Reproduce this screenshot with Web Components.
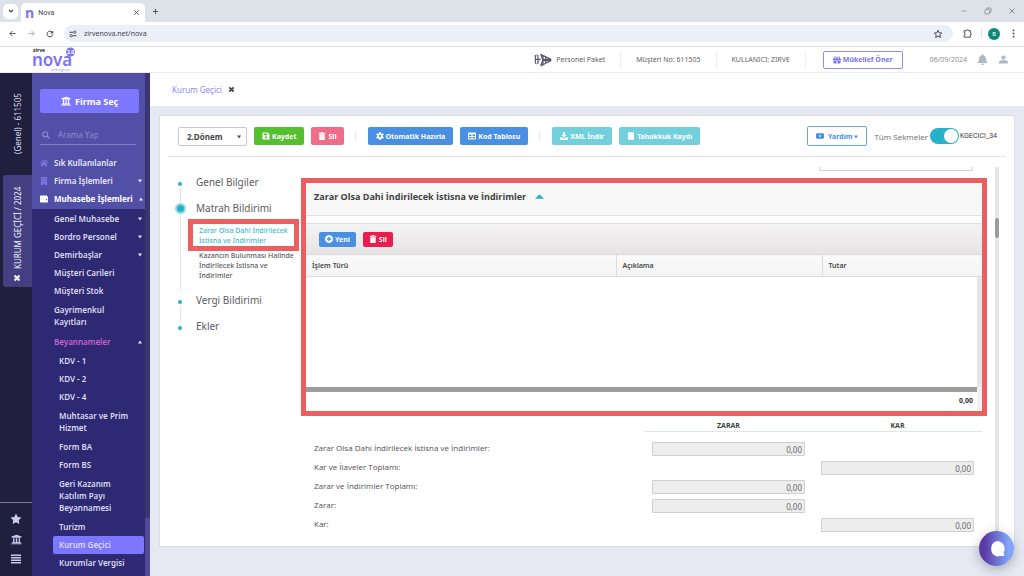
<!DOCTYPE html>
<html lang="tr">
<head>
<meta charset="utf-8">
<title>Nova</title>
<style>
  html, body { margin: 0; height: 100%; }
  body { font-family: "Open Sans", "Noto Sans", sans-serif; font-size: 8px; color: #4a4a4a; background: #e6e9f2; }
</style>
</head>
<body>
<nova-window></nova-window>
<script>
const RESET = `
  *, *::before, *::after { box-sizing: border-box; }
  :host { box-sizing: border-box; display: block; }
  button, input, select { font: inherit; color: inherit; margin: 0; padding: 0; border: 0; background: none; }
  ul, ol { list-style: none; margin: 0; padding: 0; }
  a { color: inherit; text-decoration: none; }
`;
class Base extends HTMLElement {
  connectedCallback() {
    if (this.shadowRoot) return;
    this.attachShadow({ mode: 'open' }).innerHTML = `<style>${RESET}${this.css()}</style>${this.html()}`;
  }
  css() { return ''; }
  html() { return '<slot></slot>'; }
}
const define = (name, css, html) => customElements.define(name, class extends Base {
  css() { return css; }
  html() { return typeof html === 'function' ? html(this) : html; }
});

/* Icons: [viewBox, markup] */
const ICONS = {
  chevron: ['0 0 16 16', '<path d="M4 6l4 4 4-4" fill="none" stroke="currentColor" stroke-width="2.4"/>'],
  close: ['0 0 16 16', '<path d="M3 3l10 10M13 3L3 13" fill="none" stroke="currentColor" stroke-width="2"/>'],
  closeBold: ['0 0 16 16', '<path d="M3 3l10 10M13 3L3 13" fill="none" stroke="currentColor" stroke-width="4.4"/>'],
  plus: ['0 0 16 16', '<path d="M8 2v12M2 8h12" fill="none" stroke="currentColor" stroke-width="2"/>'],
  back: ['0 0 16 16', '<path d="M15 8H2M8 2L2 8l6 6" fill="none" stroke="currentColor" stroke-width="2"/>'],
  forward: ['0 0 16 16', '<path d="M1 8h13M8 2l6 6-6 6" fill="none" stroke="currentColor" stroke-width="2"/>'],
  reload: ['0 0 16 16', '<path d="M13.5 9A5.7 5.7 0 1 1 12 4" fill="none" stroke="currentColor" stroke-width="2"/><path d="M14.5 1v6h-6z" fill="currentColor"/>'],
  tune: ['0 0 16 16', '<path d="M1 4.5h7M8 11.5h7" stroke="currentColor" stroke-width="2"/><circle cx="11.5" cy="4.5" r="2.4" fill="none" stroke="currentColor" stroke-width="1.8"/><circle cx="4.5" cy="11.5" r="2.4" fill="none" stroke="currentColor" stroke-width="1.8"/>'],
  starLine: ['0 0 24 24', '<path d="M12 3l2.7 6 6.3.6-4.800 4.300 1.400 6.600L12 17l-5.600 3.500 1.400-6.600L3 9.600 9.300 9z" fill="none" stroke="currentColor" stroke-width="2.300"/>'],
  puzzle: ['0 0 16 16', '<path d="M2 3h4.200a1.800 1.800 0 0 1 3.600 0H13v4a1.800 1.800 0 0 1 0 3.600V14.500H2v-3.500a2 2 0 0 0 0-4z" fill="none" stroke="currentColor" stroke-width="1.700"/>'],
  dots: ['0 0 16 16', '<circle cx="8" cy="2.500" r="1.700" fill="currentColor"/><circle cx="8" cy="8" r="1.700" fill="currentColor"/><circle cx="8" cy="13.500" r="1.700" fill="currentColor"/>'],
  minimize: ['0 0 16 16', '<path d="M1 8h14" stroke="currentColor" stroke-width="2"/>'],
  restore: ['0 0 16 16', '<rect x="2" y="5" width="9" height="9" rx="2" fill="none" stroke="currentColor" stroke-width="1.800"/><path d="M5 3.500Q5 2 7 2h5q2 0 2 2v5q0 2-1.500 2" fill="none" stroke="currentColor" stroke-width="1.800"/>'],
  gift: ['0 0 512 512', '<path fill="currentColor" d="M32 448c0 17.700 14.300 32 32 32h160V320H32zm256 32h160c17.700 0 32-14.300 32-32V320H288zM480 160h-42c6-12 10-25 10-40 0-48-39-88-88-88-41 0-68 21-104 69-35-48-62-69-103-69-49 0-88 40-88 88 0 15 3 28 10 40H32c-18 0-32 14-32 32v80c0 9 7 16 16 16h480c9 0 16-7 16-16v-80c0-18-14-32-32-32zm-327 0a40 40 0 0 1 0-80c21 0 31 4 85 80zm206 0h-85c54-76 64-80 85-80a40 40 0 0 1 0 80z"/>'],
  bell: ['0 0 448 512', '<path fill="currentColor" d="M224 512c35 0 64-29 64-64H160c0 35 29 64 64 64zm215-150c-19-21-55-52-55-154 0-78-54-140-128-155V32a32 32 0 0 0-64 0v21C118 68 64 130 64 208c0 102-36 133-55 154-6 6-9 14-9 22 0 16 13 32 32 32h384c19 0 32-16 32-32 0-8-3-16-9-22z"/>'],
  user: ['0 0 16 16', '<circle cx="8" cy="4.500" r="3.800" fill="currentColor"/><path d="M0 15v-2.500c0-2 4-3.500 8-3.500s8 1.500 8 3.500V15z" fill="currentColor"/>'],
  bank: ['0 0 512 512', '<path fill="currentColor" d="M496 128v16a8 8 0 0 1-8 8h-24v12c0 7-5 12-12 12H60c-7 0-12-5-12-12v-12H24a8 8 0 0 1-8-8v-16a8 8 0 0 1 5-7l232-88a8 8 0 0 1 6 0l232 88a8 8 0 0 1 5 7zm-24 304H40c-13 0-24 11-24 24v16a8 8 0 0 0 8 8h464a8 8 0 0 0 8-8v-16c0-13-11-24-24-24zM96 192v192H60c-7 0-12 5-12 12v20h416v-20c0-7-5-12-12-12h-36V192h-64v192h-64V192h-64v192h-64V192z"/>'],
  search: ['0 0 16 16', '<circle cx="6.500" cy="6.500" r="5" fill="none" stroke="currentColor" stroke-width="2.400"/><path d="M10 10l5 5" stroke="currentColor" stroke-width="3"/>'],
  home: ['0 0 16 16', '<path fill="currentColor" d="M8 1L0 8l1 1.200L8 3.200l7 6L16 8l-2.500-2.200V2h-2v2zM2.500 9.500L8 4.800l5.500 4.700V15H9.700v-4H6.300v4H2.500z"/>'],
  building: ['0 0 16 16', '<path fill="currentColor" fill-rule="evenodd" d="M2 0h12v16H9.500v-3h-3v3H2zM4.500 2v2h2V2zm5 0v2h2V2zm-5 3.500v2h2v-2zm5 0v2h2v-2zM4.500 9v2h2V9zm5 0v2h2V9z"/>'],
  wallet: ['0 0 16 16', '<path fill="currentColor" fill-rule="evenodd" d="M1.500 1H13q1.500 0 1.500 2H16v10.500Q16 15 14.500 15h-13Q0 15 0 13.500v-11Q0 1 1.500 1zM13 8.200a1.200 1.200 0 1 0 .1 0z"/>'],
  star: ['0 0 24 24', '<path fill="currentColor" d="M12 1l3.400 7 7.600 1-5.500 5.300 1.300 7.700L12 18.400 5.200 22l1.300-7.700L1 9l7.600-1z"/>'],
  bars: ['0 0 16 16', '<path d="M0 2h16M0 6h16M0 10h16M0 14h16" stroke="currentColor" stroke-width="2.2"/>'],
  save: ['0 0 16 16', '<path fill="currentColor" fill-rule="evenodd" d="M2 1h9.500L15 4.500V14q0 1-1 1H2q-1 0-1-1V2q0-1 1-1zM3.500 3v3.500h7V3zM8 8.600a2.200 2.200 0 1 0 .1 0z"/>'],
  trash: ['0 0 16 16', '<path fill="currentColor" d="M1.500 1.500H5.500L6.500 0h3l1 1.500h4v2h-13zM2.500 4.500h11V15q0 1-1 1h-9q-1 0-1-1z"/><path d="M5.500 6.500v7M8 6.500v7M10.500 6.500v7" stroke="#e88" stroke-opacity=".4" stroke-width=".8"/>'],
  gear: ['0 0 16 16', '<circle cx="8" cy="8" r="4" fill="none" stroke="currentColor" stroke-width="3.400"/><path d="M8 0v3.500M8 12.500V16M1.100 4l3 1.700M11.900 10.300l3 1.700M1.100 12l3-1.700M11.900 5.700l3-1.700" stroke="currentColor" stroke-width="3.400"/>'],
  table: ['0 0 16 16', '<path fill="currentColor" fill-rule="evenodd" d="M1.500 1h13q1.500 0 1.500 1.500v11q0 1.500-1.500 1.500h-13Q0 15 0 13.500v-11Q0 1 1.500 1zM2 5v3h5V5zm7 0v3h5V5zM2 10v3h5v-3zm7 0v3h5v-3z"/>'],
  download: ['0 0 16 16', '<path fill="currentColor" d="M6.300 0h3.400v5.500h3.600L8 11 2.700 5.500h3.600zM0 11h5l3 2.500 3-2.500h5v5H0z"/>'],
  receipt: ['0 0 16 16', '<path fill="currentColor" d="M2 0l2 1 2-1 2 1 2-1 2 1 2-1v16l-2-1-2 1-2-1-2 1-2-1-2 1z"/>'],
  youtube: ['0 0 20 16', '<path fill="currentColor" fill-rule="evenodd" d="M3 1h14q3 0 3 3v8q0 3-3 3H3q-3 0-3-3V4q0-3 3-3zM8 5v6l5.500-3z"/>'],
  plusCircle: ['0 0 16 16', '<path fill="currentColor" fill-rule="evenodd" d="M8 0a8 8 0 1 0 .1 0zM6.700 3.500h2.600v3.200h3.200v2.600H9.300v3.200H6.700V9.300H3.500V6.700h3.200z"/>'],
  up: ['0 0 16 8', '<path fill="currentColor" d="M0 8l7-7q1-1 2 0l7 7z"/>'],
  caretUp: ['0 0 8 8', '<path fill="currentColor" d="M0 7l4-6 4 6z"/>'],
  caretDown: ['0 0 8 8', '<path fill="currentColor" d="M0 1l4 6 4-6z"/>'],
  chat: ['0 0 16 16', '<path fill="currentColor" d="M8 0a7.700 7.700 0 1 1 0 15.400A8 8 0 0 1 8 0zM12 11l3.500 1.500-.5 2.500H9z"/>'],
  fan: ['0 0 54 42', '<path d="M3 12l8-8M22 40l10-7M6 34l8-8" stroke="#c4aef5" stroke-width="4"/><g fill="none" stroke="#5b5668" stroke-width="3.4"><path d="M4 6v26M12 6v26M4 19h16"/><path d="M20 4l30 14v6L20 38M20 4l6 15h26M20 38l6-15h26M27 8v26M35 12v18M43 15v12"/></g>']
};
define('nova-icon', `
  :host { display: inline-block; flex: none; width: var(--size, 8px); height: var(--size, 8px); }
  svg { display: block; width: 100%; height: 100%; }
`, el => { const [box, body] = ICONS[el.getAttribute('name')]; return `<svg viewBox="${box}" aria-hidden="true">${body}</svg>`; });

/* Solid or outlined action button */
define('nova-button', `
  :host { display: inline-block; flex: none; font-size: 7px; font-family: "Noto Sans", sans-serif; }
  button { display: flex; align-items: center; justify-content: center; gap: 2px; width: 100%; height: var(--h, 18px);
    padding: 0 var(--pad, 7px); border-radius: 2px; border: 1px solid var(--line, transparent); background: var(--bg, #4a90e2);
    color: var(--fg, #fff); font-weight: 700; white-space: nowrap; }
  ::slotted(nova-icon) { vertical-align: middle; }
`, el => `<button type="button">${el.getAttribute('icon') ? `<nova-icon name="${el.getAttribute('icon')}"></nova-icon>` : ''}<span><slot></slot></span></button>`);

/* Browser chrome */
define('browser-tabs', `
  :host { display: flex; align-items: center; height: 22px; padding: 0 5px 0 3px; background: #dde1e8; font-family: Roboto, sans-serif; font-size: 7px; color: #45474a; }
  button { display: flex; align-items: center; justify-content: center; width: 15px; height: 15px; }
  .list { background: #fff; border-radius: 5px; margin-right: 3px; }
  .tab { display: flex; align-items: center; align-self: flex-end; gap: 4px; width: 124px; height: 19px; padding: 0 1px 0 4px; background: #fff; border-radius: 5px 5px 0 0; }
  .tab b { font: 700 14px/16px "Open Sans", sans-serif; color: #7b72f5; }
  .tab span { flex: 1; }
  .win { margin-left: auto; display: flex; gap: 9px; color: #8b8f95; }
`, `
  <button class="list" type="button" aria-label="Sekmelerde ara"><nova-icon name="chevron" style="--size:8px"></nova-icon></button>
  <div class="tab"><b aria-hidden="true">n</b><span>Nova</span><button type="button" aria-label="Sekmeyi kapat"><nova-icon name="close" style="--size:7px"></nova-icon></button></div>
  <button type="button" aria-label="Yeni sekme" style="margin-left:3px"><nova-icon name="plus" style="--size:7px"></nova-icon></button>
  <div class="win">
    <button type="button" aria-label="Simge durumu"><nova-icon name="minimize" style="--size:6px"></nova-icon></button>
    <button type="button" aria-label="Geri yükle"><nova-icon name="restore" style="--size:8px"></nova-icon></button>
    <button type="button" aria-label="Kapat"><nova-icon name="close" style="--size:8px"></nova-icon></button>
  </div>`);

define('browser-bar', `
  :host { display: flex; align-items: center; height: 25px; padding: 0 4px 1px 5px; background: #fff; border-bottom: 1px solid #dcdee2; font-family: Roboto, sans-serif; font-size: 8px; color: #45474a; }
  button { display: flex; align-items: center; justify-content: center; width: 14px; height: 14px; }
  .nav { display: flex; gap: 5px; margin-right: 7px; }
  .url { flex: 1; display: flex; align-items: center; gap: 4px; height: 17px; padding: 0 8px 0 2px; border-radius: 9px; background: #eaeff9; }
  input { flex: 1; min-width: 0; height: 14px; outline: 0; font-family: "Noto Sans", sans-serif; font-size: 7px; }
  .tools { display: flex; align-items: center; margin-left: 7px; }
  .tools i { width: 1px; height: 9px; margin: 0 6px 0 7px; background: #cfe0fb; }
  .me { width: 12px; height: 12px; border-radius: 50%; background: #0b8a78; color: #fff; font-size: 6px; margin-right: 6px; }
`, `
  <div class="nav">
    <button type="button" aria-label="Geri"><nova-icon name="back" style="--size:7px"></nova-icon></button>
    <button type="button" aria-label="İleri" style="color:#a5a8ac"><nova-icon name="forward" style="--size:7px"></nova-icon></button>
    <button type="button" aria-label="Yenile"><nova-icon name="reload"></nova-icon></button>
  </div>
  <div class="url"><button type="button" aria-label="Site bilgisi"><nova-icon name="tune"></nova-icon></button>
    <input type="text" value="zirvenova.net/nova" aria-label="Adres"><button type="button" aria-label="Yer işareti"><nova-icon name="starLine" style="--size:10px"></nova-icon></button></div>
  <div class="tools"><button type="button" aria-label="Uzantılar"><nova-icon name="puzzle" style="--size:9px"></nova-icon></button><i></i>
    <button class="me" type="button">B</button><button type="button" aria-label="Menü"><nova-icon name="dots" style="--size:9px"></nova-icon></button></div>`);

/* Application header */
define('nova-logo', `
  :host { width: 46px; height: 26px; }
  svg { display: block; overflow: visible; font-family: "Open Sans", sans-serif; }
`, `<svg width="46" height="26" viewBox="0 0 46 26" role="img" aria-label="zirve nova">
  <text x="0" y="19" font-size="17" font-weight="600" font-family="Noto Sans, sans-serif" fill="#7b74f2">nova</text>
  <text x="1" y="5" font-size="5" font-weight="700" fill="#222">zirve</text>
  <circle cx="38.500" cy="5" r="4.500" fill="#7b74f2"/><text x="38.500" y="7" font-size="5" font-weight="700" fill="#fff" text-anchor="middle">2.0</text>
  <text x="19" y="24" font-size="4" font-style="italic" fill="#9a92f6">mikrogrup</text></svg>`);

define('nova-header', `
  :host { display: flex; align-items: center; height: 26px; padding: 0 15px 0 32px; background: #fff; border-bottom: 1px solid #ebebef; color: #5f5f63; font-family: "Noto Sans", sans-serif; font-size: 7px; }
  .info { margin-left: auto; display: flex; align-items: center; }
  .cell { display: flex; align-items: center; gap: 4px; height: 18px; padding: 0 15px; border-right: 1px solid #eeeef0; white-space: nowrap; }
  nova-button { --bg: #fff; --line: #8f89fa; --fg: #7b74f2; --pad: 9px; margin: 0 27px 0 17px; }
  time { color: #8e8e96; margin-right: 9px; }
  .ic { display: flex; gap: 9px; color: #adb8c9; }
  .ic button { display: grid; place-items: center; width: 12px; height: 12px; }
`, `<nova-logo></nova-logo>
  <div class="info">
    <div class="cell"><nova-icon name="fan" style="--size:18px"></nova-icon>Personel Paket</div>
    <div class="cell">Müşteri No: 611505</div>
    <div class="cell">KULLANICI: ZIRVE</div>
    <nova-button icon="gift">Mükellef Öner</nova-button>
    <time datetime="2024-09-06">06/09/2024</time>
    <div class="ic"><button type="button" aria-label="Bildirimler"><nova-icon name="bell" style="--size:11px"></nova-icon></button>
    <button type="button" aria-label="Hesap"><nova-icon name="user" style="--size:9px"></nova-icon></button></div>
  </div>`);

/* Dark rail with vertical tabs */
define('nova-rail', `
  :host { display: flex; flex-direction: column; align-items: flex-end; background: #211f3e; color: #dcdcf0; font-family: "Noto Sans", sans-serif; }
  .v { display: flex; align-items: center; writing-mode: vertical-rl; transform: rotate(180deg); white-space: nowrap; }
  .top { justify-content: center; width: 29px; height: 102px; }
  .tab { justify-content: flex-start; gap: 5px; width: 29px; height: 112px; padding: 5px 0; background: #433f80; border-radius: 3px 0 0 3px; transform: none; color: #f2f2fb; }
  .tab { transform: rotate(180deg); border-radius: 0 3px 3px 0; }
  .tools { display: flex; flex-direction: column; align-items: center; gap: 8px; width: 100%; margin-top: auto; padding: 10px 0 11px; border-top: 1px solid #7d7c92; color: #c7ccf3; }
  .tools button { display: grid; place-items: center; height: 12px; }
`, `<button type="button" class="v top">(Genel) - 611505</button>
  <button type="button" class="v tab"><nova-icon name="closeBold"></nova-icon>KURUM GEÇİCİ / 2024</button>
  <div class="tools"><button type="button" aria-label="Favoriler"><nova-icon name="star" style="--size:12px"></nova-icon></button>
  <button type="button" aria-label="Firmalar"><nova-icon name="bank" style="--size:11px"></nova-icon></button>
  <button type="button" aria-label="Menü"><nova-icon name="bars" style="--size:10px"></nova-icon></button></div>`);

/* One menu row; level, icon, caret and state come from attributes */
define('menu-row', `
  a { display: flex; align-items: center; gap: 6px; line-height: 12px; padding: 3px 3px 3px 22px; color: #dcdbf0; font-size: 8px; font-weight: 600; }
  span { flex: 1; }
  :host([level="1"]) a { padding-left: 8px; color: #e9e8f9; }
  :host([level="3"]) a { padding-left: 27px; }
  :host([wrap]) a { padding-top: 4px; padding-bottom: 4px; }
  :host([accent]) a { color: #cf5fd0; padding-top: 4px; }
  :host([strong]) a { font-weight: 700; color: #fff; white-space: nowrap; }
  :host([active]) a { margin: 0 1px 0 21px; padding-left: 6px; background: #7d77ff; border-radius: 2px; }
  .ic { color: #7f78e8; } :host([strong]) .ic { color: #fff; }
  .car { color: #e9e8f9; }
`, el => {
  const icon = el.getAttribute('icon'), caret = el.getAttribute('caret');
  return `<a href="#">${icon ? `<nova-icon class="ic" name="${icon}"></nova-icon>` : ''}<span><slot></slot></span>${caret ? `<nova-icon class="car" name="${caret}" style="--size:4px"></nova-icon>` : ''}</a>`;
});

define('nova-sidebar', `
  :host { display: flex; background: #2d2973; overflow: hidden; font-family: "Noto Sans", sans-serif; }
  nav { flex: 1; min-width: 0; }
  .head { background: #524fa6; padding: 16px 0 1px; }
  nova-button { display: block; margin: 0 6px 0 8px; --h: 24px; --bg: #7d77ff; font-size: 9px; }
  .search { display: flex; align-items: center; gap: 8px; height: 20px; margin: 12px 9px 9px 8px; padding: 0 2px; border-bottom: 1px solid #7f7cc4; color: #8e8bd8; }
  input { flex: 1; min-width: 0; outline: 0; } input::placeholder { color: #8e8bd8; opacity: 1; }
  .sub { padding-top: 1px; }
  .deep { padding-top: 1px; }
  .track { display: flex; flex-direction: column; justify-content: flex-end; width: 5px; background: #3a3670; }
  .track i { height: 58px; background: #4f4b98; }
`, `<nav aria-label="Menü">
  <div class="head">
    <nova-button icon="bank" style="--size:10px">&nbsp;Firma Seç</nova-button>
    <label class="search"><nova-icon name="search"></nova-icon><input type="search" placeholder="Arama Yap" aria-label="Arama Yap"></label>
    <menu-row level="1" icon="home">Sık Kullanılanlar</menu-row>
    <menu-row level="1" icon="building" caret="caretDown">Firma İşlemleri</menu-row>
    <menu-row level="1" icon="wallet" caret="caretUp" strong>Muhasebe İşlemleri</menu-row>
  </div>
  <div class="sub">
    <menu-row caret="caretDown">Genel Muhasebe</menu-row>
    <menu-row caret="caretDown">Bordro Personel</menu-row>
    <menu-row caret="caretDown">Demirbaşlar</menu-row>
    <menu-row>Müşteri Carileri</menu-row>
    <menu-row>Müşteri Stok</menu-row>
    <menu-row wrap>Gayrimenkul<br>Kayıtları</menu-row>
    <menu-row accent caret="caretUp">Beyannameler</menu-row>
    <div class="deep">
      <menu-row level="3">KDV - 1</menu-row>
      <menu-row level="3">KDV - 2</menu-row>
      <menu-row level="3">KDV - 4</menu-row>
      <menu-row level="3" wrap>Muhtasar ve Prim<br>Hizmet</menu-row>
      <menu-row level="3">Form BA</menu-row>
      <menu-row level="3">Form BS</menu-row>
      <menu-row level="3" wrap>Geri Kazanım<br>Katılım Payı<br>Beyannamesi</menu-row>
      <menu-row level="3">Turizm</menu-row>
      <menu-row level="3" active>Kurum Geçici</menu-row>
      <menu-row level="3">Kurumlar Vergisi</menu-row>
    </div>
  </div></nav><div class="track"><i></i></div>`);

/* Document tab strip */
define('doc-tabs', `
  :host { display: flex; align-items: center; gap: 5px; height: 33px; padding: 0 22px 1px; background: #fff; font-family: "Noto Sans", sans-serif; }
  a { color: #8d87f8; }
  button { width: 10px; height: 10px; display: grid; place-items: center; }
`, `<a href="#">Kurum Geçici</a><button type="button" aria-label="Sekmeyi kapat"><nova-icon name="closeBold" style="--size:7px"></nova-icon></button>`);

define('form-toolbar', `
  :host { display: flex; align-items: center; gap: 7px; height: 41px; margin: 0 8px; padding: 0 9px 0 10px; border-bottom: 1px solid #e4e4e8; }
  .pick { position: relative; flex: none; }
  select { appearance: none; display: block; width: 69px; height: 19px; padding: 0 8px; border: 1px solid #c9c9c9; border-radius: 2px; font-weight: 700; color: #444; background: #fff; }
  .pick nova-icon { position: absolute; right: 6px; top: 8px; pointer-events: none; }
  i { width: 1px; height: 10px; margin: 0 5px 0 4px; background: #e6e6e6; }
  .teal { --bg: #72cfdb; }
  .help { --bg: #fff; --line: #6aa4e8; --fg: #4a90e2; --h: 20px; --pad: 8px; margin-left: auto; }
  label { display: flex; align-items: center; gap: 2px; color: #6a6a6e; white-space: nowrap; }
  input { appearance: none; width: 29px; height: 16px; padding: 1px; border-radius: 8px; background: #26b2c9; display: flex; justify-content: flex-end; }
  input::before { content: ""; width: 14px; height: 14px; border-radius: 50%; background: #fff; }
  .code { margin-left: -6px; font-family: Roboto, sans-serif; font-size: 7px; color: #3a3a3a; }
`, `<span class="pick"><select aria-label="Dönem"><option>2.Dönem</option></select><nova-icon name="caretDown" style="--size:4px"></nova-icon></span>
  <nova-button icon="save" style="--bg:#56bf2f">Kaydet</nova-button>
  <nova-button icon="trash" style="--bg:#ee6e8a;--pad:6px">Sil</nova-button><i></i>
  <nova-button icon="gear">Otomatik Hazırla</nova-button>
  <nova-button icon="table">Kod Tablosu</nova-button><i></i>
  <nova-button class="teal" icon="download">XML İndir</nova-button>
  <nova-button class="teal" icon="receipt">Tahakkuk Kaydı</nova-button>
  <nova-button class="help" icon="youtube">&nbsp;Yardım <nova-icon name="caretDown" style="--size:4px"></nova-icon></nova-button>
  <label>Tüm Sekmeler<input type="checkbox" role="switch" checked></label>
  <span class="code">KGECICI_34</span>`);

/* Section steps at the left of the form */
define('step-nav', `
  :host { padding-top: 12px; font-family: "Noto Sans", sans-serif; font-size: 10px; color: #5c5c60; }
  li.step { position: relative; padding-left: 36px; }
  .step > a { display: block; line-height: 26px; }
  .step::before { content: ""; position: absolute; left: 18px; top: 13px; width: 4px; height: 4px; border-radius: 50%; background: #26b2c9; z-index: 1; }
  .step:not(:last-child)::after { content: ""; position: absolute; left: 20px; top: 19px; bottom: -10px; width: 1px; background: #e4e4e8; }
  .step.on::before { left: 17px; top: 10px; width: 7px; height: 7px; box-shadow: 0 0 0 2px #98dbe5; }
  .subs { font-size: 7px; font-weight: 500; line-height: 10px; margin: -2px 0 6px -8px; }
  .subs a { display: block; padding-left: 11px; white-space: nowrap; }
  .subs .hit { width: 111px; height: 32px; padding: 2px 0 0 6px; border: 5px solid #ec5f60; color: #3dbccf; }
`, `<ol><li class="step"><a href="#">Genel Bilgiler</a></li>
  <li class="step on"><a href="#">Matrah Bildirimi</a><ul class="subs">
    <li><a href="#" class="hit">Zarar Olsa Dahi İndirilecek<br>İstisna ve İndirimler</a></li>
    <li><a href="#">Kazancın Bulunması Halinde<br>İndirilecek İstisna ve<br>İndirimler</a></li></ul></li>
  <li class="step"><a href="#">Vergi Bildirimi</a></li>
  <li class="step"><a href="#">Ekler</a></li></ol>`);

/* Framed panel with the deductions grid */
define('deduction-panel', `
  :host { border: 5px solid #ec5f60; background: #fff; }
  h2 { display: flex; align-items: center; gap: 9px; height: 33px; margin: 0 0 7px; padding: 0 8px 6px; background: #f8f8f8; border-bottom: 1px solid #e2e2e2; font-size: 9px; font-weight: 700; color: #3f3f3f; }
  h2 nova-icon { width: 9px; height: 5px; color: #26b2c9; }
  .bar { display: flex; align-items: center; gap: 7px; height: 31px; padding: 0 13px; border-top: 1px solid #dedede; background: linear-gradient(#f4f3f3, #e6e4e5); }
  .bar nova-button { --h: 15px; --pad: 5px; }
  table { width: 100%; border-collapse: collapse; table-layout: fixed; font-size: 7px; font-family: "Noto Sans", sans-serif; }
  th { height: 22px; padding: 0 6px; text-align: left; font-weight: 600; background: linear-gradient(#fafafa, #f3f3f3); border: solid #dcdcdc; border-width: 1px 0; }
  th + th { border-left-width: 1px; padding-left: 5px; }
  tbody td { height: 113px; padding: 0; } tbody td:last-child { background: #e6e6e6; }
  tfoot td { height: 21px; padding: 0 4px 2px 0; border-top: 5px solid #9d9d9d; text-align: right; font-weight: 700; color: #333; }
  tfoot td:last-child { border-top-color: #f2f2f2; background: #f2f2f2; }
`, `<h2>Zarar Olsa Dahi İndirilecek İstisna ve İndirimler <nova-icon name="up"></nova-icon></h2>
  <div class="bar"><nova-button icon="plusCircle">Yeni</nova-button><nova-button icon="trash" style="--bg:#e91e4e">Sil</nova-button></div>
  <table><colgroup><col style="width:46%"><col><col style="width:154px"><col style="width:5px"></colgroup>
  <thead><tr><th>İşlem Türü</th><th>Açıklama</th><th colspan="2">Tutar</th></tr></thead>
  <tbody><tr><td></td><td></td><td></td><td></td></tr></tbody>
  <tfoot><tr><td></td><td></td><td>0,00</td><td></td></tr></tfoot></table>`);

const ROWS = [['Zarar Olsa Dahi İndirilecek İstisna ve İndirimler:', 1], ['Kar ve İlaveler Toplamı:', 2], ['Zarar ve İndirimler Toplamı:', 1], ['Zarar:', 1], ['Kar:', 2]];
define('profit-summary', `
  :host { margin: 5px 5px 0; color: #505050; }
  table { width: 100%; border-collapse: collapse; table-layout: fixed; }
  th { padding: 0 8px; }
  thead th { height: 11px; line-height: 10px; font-size: 7px; font-weight: 700; color: #3f3f3f; }
  thead th + th { border-bottom: 1px solid #dde8e6; }
  tbody::before { content: ""; display: block; height: 8px; }
  tbody th { height: 19px; padding-bottom: 3px; text-align: left; font-weight: 400; white-space: nowrap; }
  td { padding: 0 8px; }
  input { display: block; width: 100%; height: 14px; padding: 0 2px; line-height: 12px; text-align: right; font-family: "Noto Sans", sans-serif; color: #6a6a6a; background: #ededed; border: 1px solid #cfcfcf; border-radius: 1px; }
`, `<table><colgroup><col style="width:50%"><col><col></colgroup>
  <thead><tr><th></th><th>ZARAR</th><th>KAR</th></tr></thead><tbody>` +
  ROWS.map(([t, c], i) => { const f = `<input id="r${i}" readonly value="0,00">`;
    return `<tr><th scope="row"><label for="r${i}">${t}</label></th><td>${c === 1 ? f : ''}</td><td>${c === 2 ? f : ''}</td></tr>`; }).join('') + `</tbody></table>`);

define('form-card', `
  :host { margin: 9px 9px 0; background: #fff; border: 1px solid #dcdee4; }
  .area { display: grid; grid-template-columns: 141px minmax(0, 1fr) 4px; margin-right: 15px; }
  .content { padding: 10px 8px 11px 0; }
  .prev { display: block; width: 154px; height: 4px; margin: 0 14px 7px auto; border: 1px solid #cfcfcf; border-top: 0; border-radius: 0 0 2px 2px; }
  .scroll { margin-top: 10px; padding-top: 51px; background: #e6e6e6; }
  .scroll i { display: block; height: 20px; border-radius: 2px; background: #9d9d9d; }
`, `<form-toolbar></form-toolbar>
  <div class="area"><step-nav></step-nav>
    <div class="content"><div class="prev"></div><deduction-panel></deduction-panel><profit-summary></profit-summary></div>
    <div class="scroll"><i></i></div></div>`);

define('chat-launcher', `
  :host { position: fixed; right: 10px; bottom: 10px; }
  button { display: grid; place-items: center; width: 35px; height: 35px; border-radius: 50%; color: #fff; background: linear-gradient(90deg, #5b3aa6 15%, #7fa6fb 85%); box-shadow: 0 3px 12px rgba(0, 0, 0, .28); }
`, `<button type="button" aria-label="Canlı destek"><nova-icon name="chat" style="--size:16px"></nova-icon></button>`);

define('nova-window', `
  :host { display: flex; flex-direction: column; height: 100vh; overflow: hidden; }
  .body { flex: 1; min-height: 0; display: grid; grid-template-columns: 32px 118px minmax(0, 1fr); }
  main { overflow: hidden; }
`, `<browser-tabs></browser-tabs><browser-bar></browser-bar><nova-header></nova-header>
  <div class="body"><nova-rail></nova-rail><nova-sidebar></nova-sidebar><main><doc-tabs></doc-tabs><form-card></form-card></main></div>
  <chat-launcher></chat-launcher>`);
</script>
</body>
</html>
